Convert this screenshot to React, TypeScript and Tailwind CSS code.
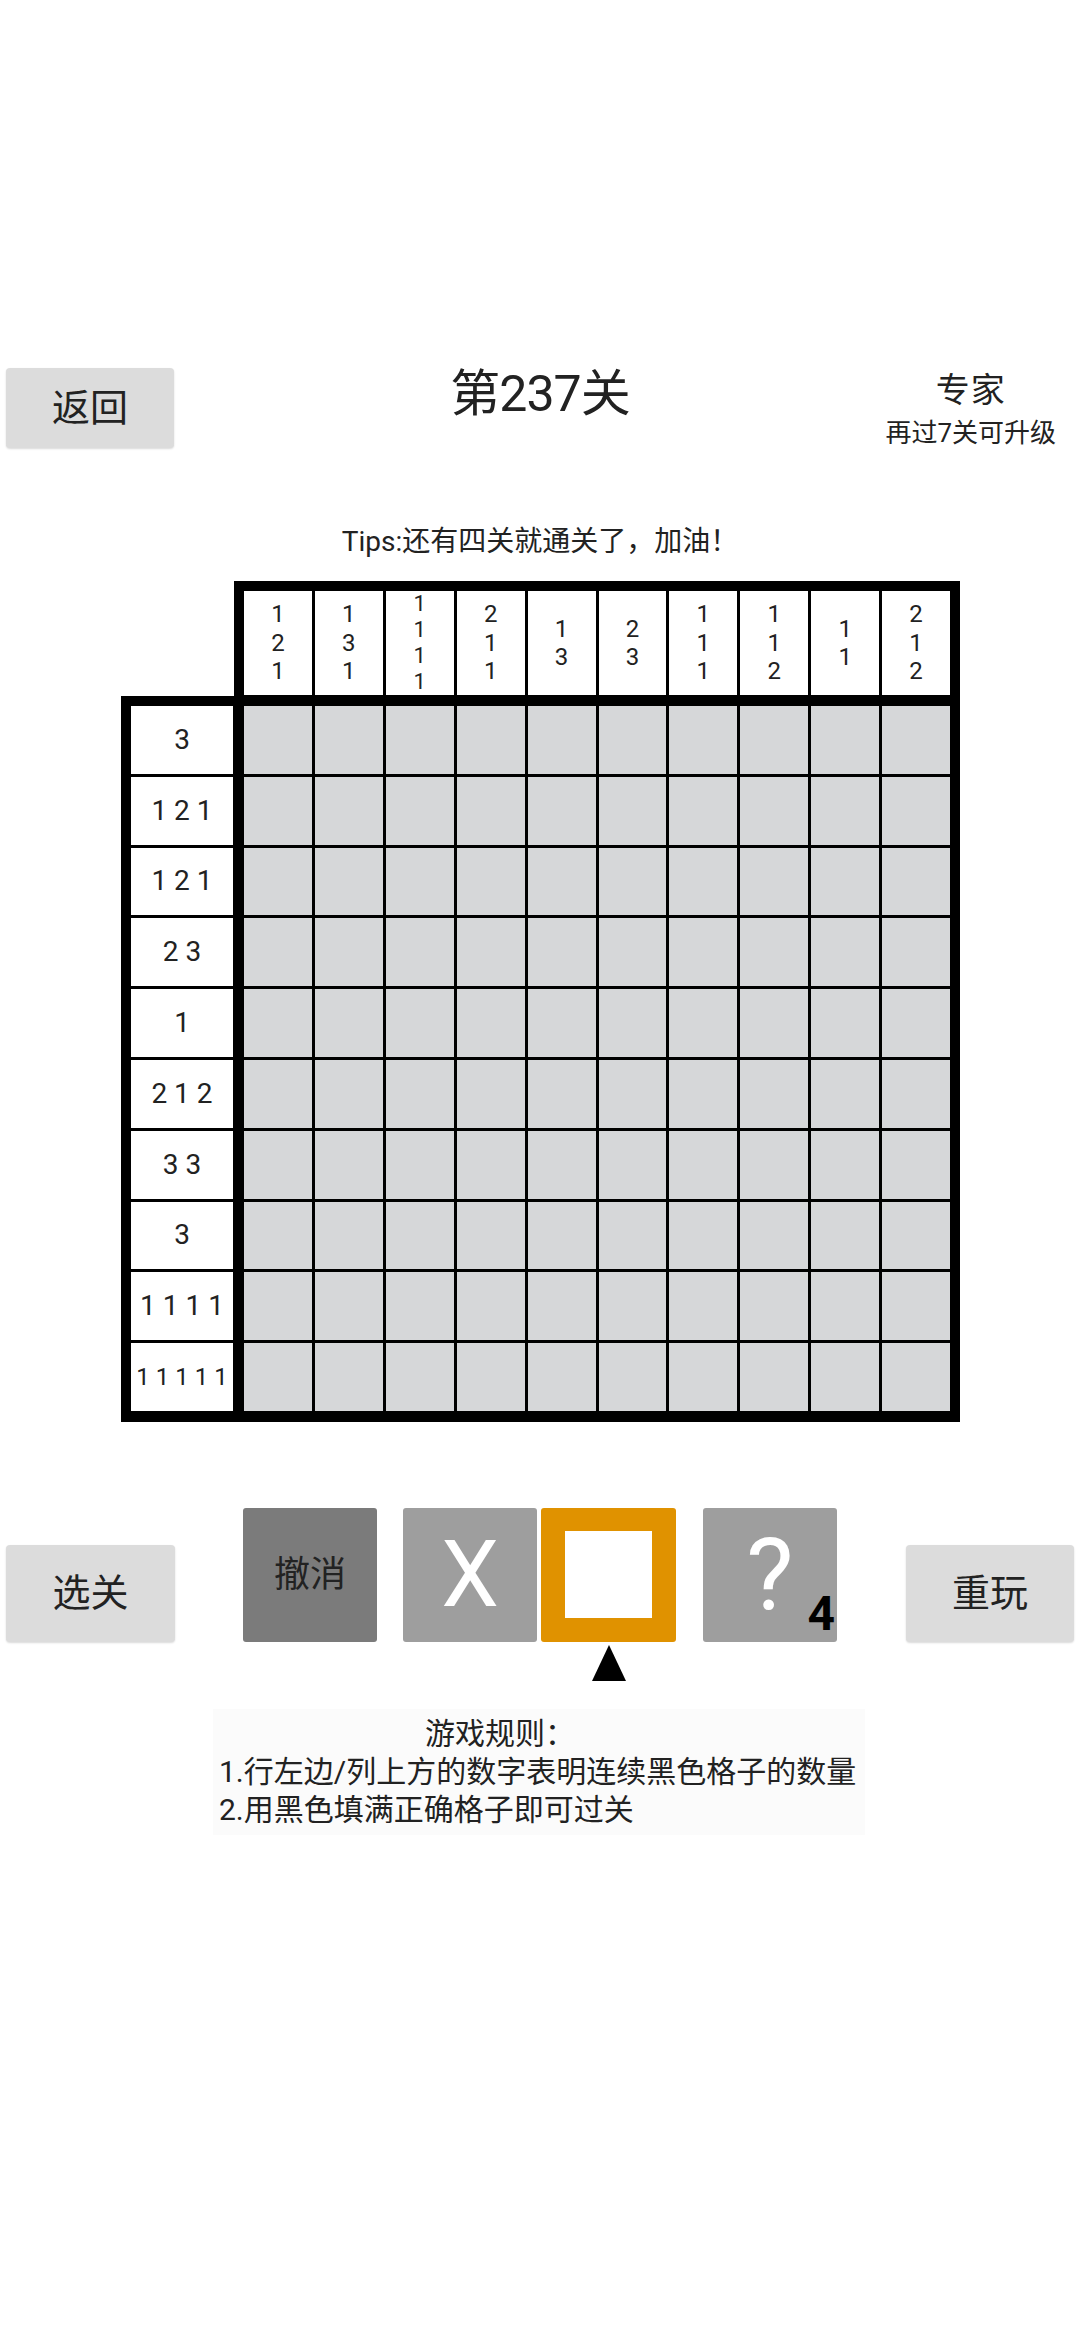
import React from 'react';

const colClues: string[][] = [
  ['1', '2', '1'],
  ['1', '3', '1'],
  ['1', '1', '1', '1'],
  ['2', '1', '1'],
  ['1', '3'],
  ['2', '3'],
  ['1', '1', '1'],
  ['1', '1', '2'],
  ['1', '1'],
  ['2', '1', '2'],
];

const rowClues: string[] = ['3', '1 2 1', '1 2 1', '2 3', '1', '2 1 2', '3 3', '3', '1 1 1 1', '1 1 1 1 1'];

const sideBtn =
  'bg-[#dcdcdc] rounded-[4px] shadow-[0_1px_2px_rgba(0,0,0,0.15)] flex items-center justify-center text-[#222] text-[38px]';

export default function App() {
  return (
    <div className="w-[1080px] min-h-[2340px] bg-white text-[#222] font-['Roboto','Noto_Sans_CJK_SC',sans-serif]">
      {/* header */}
      <div className="grid grid-cols-[1fr_auto_1fr] items-start pt-[366px]">
        <div className="pl-[6px] pt-[2px]">
          <button className={`${sideBtn} w-[168px] h-[80px]`}>返回</button>
        </div>
        <div className="text-[50px] leading-[56px] tracking-[-1px]">第237关</div>
        <div className="flex justify-end pr-[24px]">
          <div className="flex flex-col items-center">
            <div className="text-[34px] leading-[40px] tracking-[1px] pt-[4px]">专家</div>
            <div className="text-[26px] leading-[34px] mt-[6px] whitespace-nowrap">再过7关可升级</div>
          </div>
        </div>
      </div>

      {/* tips */}
      <div className="mt-[74px] text-center text-[28px] leading-[36px]">Tips:还有四关就通关了，加油！</div>

      {/* puzzle */}
      <div className="ml-[121px] w-[839px] mt-[21px]">
        <div className="ml-[113px] w-[726px] bg-black pt-[10px] px-[10px] pb-[1px]">
          <div className="grid grid-cols-10 gap-x-[3px] h-[104px]">
            {colClues.map((c, i) => (
              <div
                key={i}
                className={`bg-white flex flex-col items-center justify-center ${
                  c.length > 3 ? 'text-[22px] leading-[26px]' : 'text-[24px] leading-[28.5px]'
                }`}
              >
                {c.map((n, j) => (
                  <span key={j}>{n}</span>
                ))}
              </div>
            ))}
          </div>
        </div>
        <div className="bg-black pt-[10px] px-[10px] pb-[11px] flex gap-[11px]">
          <div className="w-[102px] flex flex-col gap-[3px]">
            {rowClues.map((r, i) => (
              <div
                key={i}
                className={`bg-white h-[67.8px] flex items-center justify-center whitespace-pre ${
                  i === 9 ? 'text-[24px]' : 'text-[28px]'
                }`}
              >
                {r}
              </div>
            ))}
          </div>
          <div className="flex-1 grid grid-cols-10 gap-[3px]">
            {Array.from({ length: 100 }).map((_, i) => (
              <div key={i} className="bg-[#d6d7d9] h-[67.8px]" />
            ))}
          </div>
        </div>
      </div>

      {/* controls */}
      <div className="flex items-start mt-[86px] pl-[6px]">
        <button className={`${sideBtn} w-[169px] h-[97px] mt-[37px]`}>选关</button>
        <button className="ml-[68px] w-[134px] h-[134px] bg-[#7b7b7b] rounded-[3px] flex items-center justify-center text-[36px] text-[#222]">
          撤消
        </button>
        <button className="ml-[26px] w-[134px] h-[134px] bg-[#9e9e9e] rounded-[3px] flex items-center justify-center text-white text-[92px] leading-none">
          X
        </button>
        <div className="ml-[4px] flex flex-col items-center">
          <button className="w-[135px] h-[134px] bg-[#e09200] rounded-[3px] flex items-center justify-center">
            <span className="w-[87px] h-[87px] bg-white" />
          </button>
          <span className="mt-[3px] w-0 h-0 border-l-[17px] border-r-[17px] border-b-[36px] border-l-transparent border-r-transparent border-b-black" />
        </div>
        <button className="relative ml-[27px] w-[134px] h-[134px] bg-[#9e9e9e] rounded-[3px] flex items-center justify-center text-white text-[100px] leading-none">
          ?
          <span className="absolute right-[2px] bottom-[4px] text-black text-[48px] font-bold leading-none">4</span>
        </button>
        <button className={`${sideBtn} ml-[69px] w-[168px] h-[97px] mt-[37px]`}>重玩</button>
      </div>

      {/* rules */}
      <div className="ml-[213px] w-[652px] mt-[28px] bg-[#fbfbfb] px-[6px] py-[6px] text-[30px] leading-[38px]">
        <div className="pl-[206px]">游戏规则：</div>
        <div className="whitespace-nowrap">1.行左边/列上方的数字表明连续黑色格子的数量</div>
        <div>2.用黑色填满正确格子即可过关</div>
      </div>
    </div>
  );
}
